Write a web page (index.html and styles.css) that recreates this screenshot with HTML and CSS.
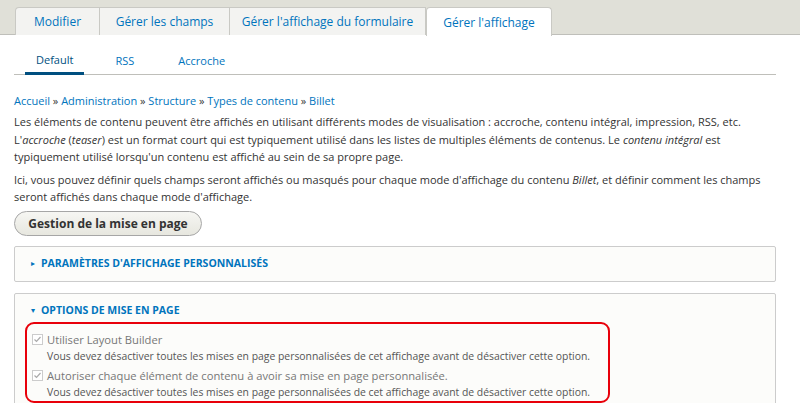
FILE: index.html
```html
<!DOCTYPE html>
<html lang="fr">
<head>
<meta charset="utf-8">
<link rel="stylesheet" href="styles.css">
</head>
<body>
<div class="header">
  <ul class="tabs">
    <li class="tab"><a>Modifier</a></li>
    <li class="tab"><a>Gérer les champs</a></li>
    <li class="tab"><a>Gérer l'affichage du formulaire</a></li>
    <li class="tab active"><a>Gérer l'affichage</a></li>
  </ul>
</div>
<div class="content">
  <ul class="subtabs">
    <li class="subtab active">Default</li>
    <li class="subtab">RSS</li>
    <li class="subtab">Accroche</li>
  </ul>
  <nav class="breadcrumb">
    <a>Accueil</a> » <a>Administration</a> » <a>Structure</a> » <a>Types de contenu</a> » <a>Billet</a>
  </nav>
  <p class="text">Les éléments de contenu peuvent être affichés en utilisant différents modes de visualisation : accroche, contenu intégral, impression, RSS, etc. L'<em>accroche</em> (<em>teaser</em>) est un format court qui est typiquement utilisé dans les listes de multiples éléments de contenus. Le <em>contenu intégral</em> est typiquement utilisé lorsqu'un contenu est affiché au sein de sa propre page.</p>
  <p class="text">Ici, vous pouvez définir quels champs seront affichés ou masqués pour chaque mode d'affichage du contenu <em>Billet</em>, et définir comment les champs seront affichés dans chaque mode d'affichage.</p>
  <button class="button">Gestion de la mise en page</button>
  <div class="details">
    <div class="summary"><span class="arrow">&#9656;</span>PARAMÈTRES D'AFFICHAGE PERSONNALISÉS</div>
  </div>
  <div class="details open">
    <div class="summary"><span class="arrow">&#9662;</span>OPTIONS DE MISE EN PAGE</div>
    <div class="highlight">
      <div class="item">
        <label class="label"><span class="check"><svg width="11" height="11" viewBox="0 0 11 11"><rect x="0.5" y="0.5" width="10" height="10" fill="#fff" stroke="#ccc"/><path d="M2.5 5.5 L4.5 7.5 L8.5 3" fill="none" stroke="#aaa" stroke-width="1.2"/></svg></span>Utiliser Layout Builder</label>
        <div class="desc">Vous devez désactiver toutes les mises en page personnalisées de cet affichage avant de désactiver cette option.</div>
      </div>
      <div class="item">
        <label class="label"><span class="check"><svg width="11" height="11" viewBox="0 0 11 11"><rect x="0.5" y="0.5" width="10" height="10" fill="#fff" stroke="#ccc"/><path d="M2.5 5.5 L4.5 7.5 L8.5 3" fill="none" stroke="#aaa" stroke-width="1.2"/></svg></span>Autoriser chaque élément de contenu à avoir sa mise en page personnalisée.</label>
        <div class="desc">Vous devez désactiver toutes les mises en page personnalisées de cet affichage avant de désactiver cette option.</div>
      </div>
    </div>
  </div>
</div>
</body>
</html>
```
FILE: styles.css
```css
* { box-sizing: border-box; }
html, body { margin: 0; padding: 0; background: #fff; }
body { font-family: "Open Sans", "DejaVu Sans", sans-serif; font-size: 11px; color: #333; overflow: hidden; height: 403px; }
.header { background: #e0e0d8; height: 35px; padding: 7px 0 0 15px; border-bottom: 1px solid #bfbfba; }
.tabs { display: flex; margin: 0; padding: 0; list-style: none; height: 28px; }
.tab { height: 28px; background: #f3f3f1; border: 1px solid #c9c9c4; border-bottom: none; border-left: none; display: flex; align-items: center; justify-content: center; color: #0074bd; font-size: 12px; }
.tab:first-child { border-left: 1px solid #c9c9c4; border-radius: 4px 0 0 0; width: 85px; }
.tab:nth-child(2) { width: 130px; }
.tab:nth-child(3) { width: 196px; }
.tab.active { background: #fff; width: 126px; border-left: 1px solid #c9c9c4; border-radius: 4px 4px 0 0; height: 29px; margin-bottom: -1px; position: relative; }
.content { padding: 0 24px 0 14px; }
.subtabs { display: flex; list-style: none; margin: 0; padding: 0 0 0 11px; border-bottom: 1px solid #bfbfba; height: 40px; align-items: flex-end; }
.subtab { color: #0074bd; font-size: 11px; padding: 0 0 6px 11px; margin-right: 33px; }
.subtab.active { color: #004f80; border-bottom: 3px solid #004f80; margin-bottom: -1px; padding: 0 11px 5px 11px; margin-right: 20px; }
.breadcrumb { margin-top: 18px; color: #333; font-size: 11px; line-height: 16px; }
.breadcrumb a { color: #0074bd; }
.text { margin: 4px 0 0; line-height: 17.5px; font-size: 11px; }
.text + .text { margin-top: 5px; }
.button { display: block; margin-top: 5px; width: 188px; height: 25px; border: 1px solid #a6a6a6; border-radius: 13px; background: linear-gradient(#f6f6f3, #e7e7df); font-family: inherit; font-size: 12px; font-weight: bold; color: #333; padding: 0; }
.details { margin-top: 10px; border: 1px solid #ccc; border-radius: 2px; background: #fcfcfa; height: 36px; }
.details.open { margin-top: 11px; height: 130px; }
.summary { color: #0074bd; font-weight: bold; font-size: 10.5px; padding: 7px 0 0 16px; line-height: 18px; }
.arrow { font-size: 8px; margin-right: 6px; display: inline-block; vertical-align: 1px; }
.highlight { margin: 3px 0 0 10px; width: 585px; border: 2px solid #e8000a; border-radius: 9px; padding: 7px 0 0 5px; height: 81px; }
.item + .item { margin-top: 3px; }
.label { display: flex; align-items: center; color: #777; font-size: 11.2px; line-height: 17px; }
.check { display: inline-flex; margin-right: 4px; }
.desc { color: #555; font-size: 10.4px; padding-left: 15px; margin-top: 1px; line-height: 15px; }
```
